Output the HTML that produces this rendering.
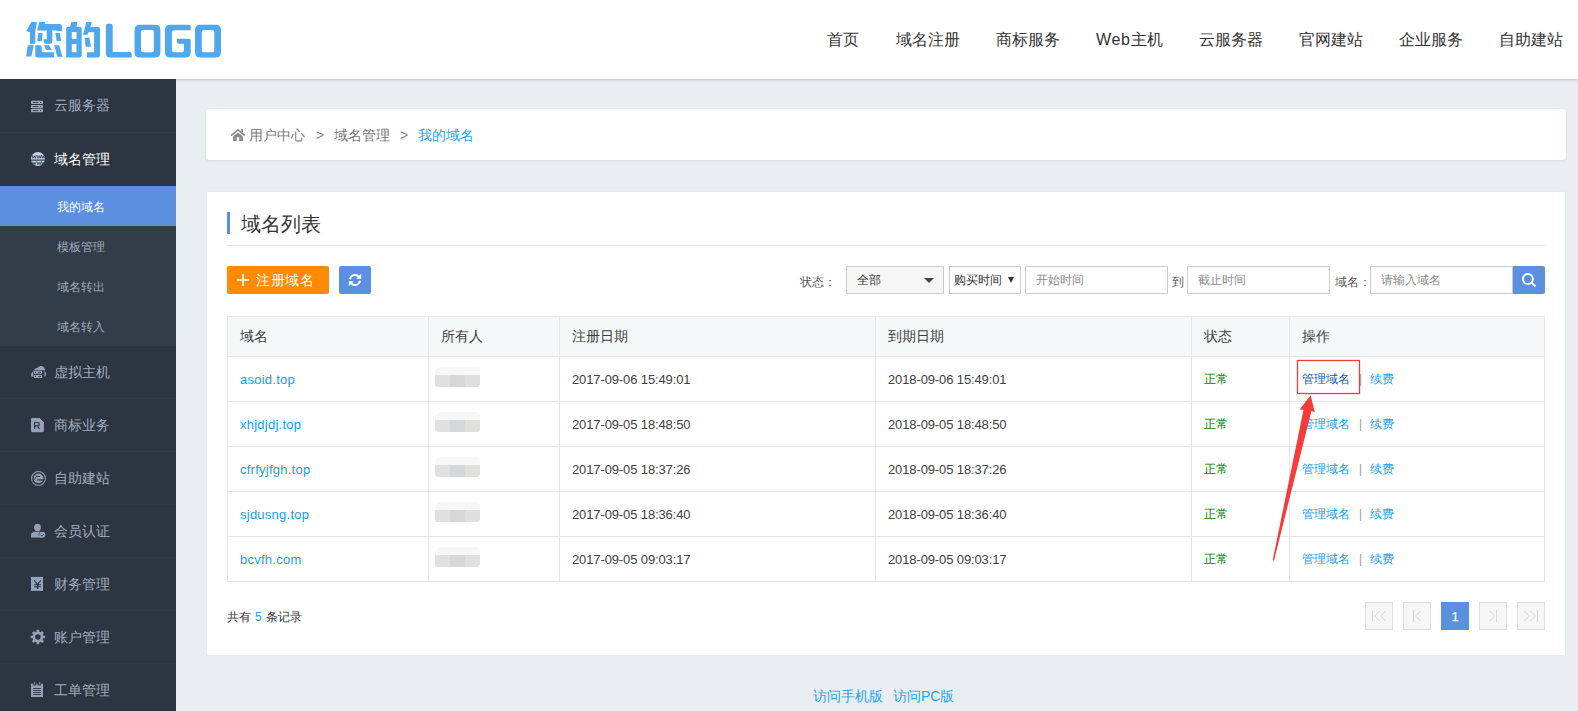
<!DOCTYPE html>
<html><head><meta charset="utf-8">
<style>
*{margin:0;padding:0;box-sizing:border-box}
html,body{width:1578px;height:711px;overflow:hidden;background:#e9eef1;font-family:"Liberation Sans",sans-serif;color:#333}
#hd{position:absolute;left:0;top:0;width:1578px;height:79px;background:#fff;box-shadow:0 1px 3px rgba(0,0,0,.2);z-index:5}
#logo{position:absolute;left:26px;top:21px}
#nav{position:absolute;top:0;left:0;height:79px}
#nav span{position:absolute;top:30px;font-size:16px;line-height:20px;color:#333;white-space:nowrap}
#sb{position:absolute;left:0;top:79px;width:176px;height:632px;background:#2c3541;z-index:6}
.mi{position:absolute;left:0;width:176px;height:53px;border-top:1px solid #2f3a47}
.mi .ic{position:absolute;left:30px;top:19px;width:15px;height:15px}
.mi .t{position:absolute;left:54px;top:17px;font-size:14px;line-height:18px;color:#a2acbf;white-space:nowrap}
.mi.on .t{color:#fff}
#sub{position:absolute;left:0;top:107px;width:176px;height:160px;background:#333d49}
.si{position:absolute;left:0;width:176px;height:40px}
.si .t{position:absolute;left:57px;top:14px;font-size:12px;line-height:15px;color:#9ea8b8;white-space:nowrap}
.si.on{background:#5b8fe0}
.si.on .t{color:#fff}
.card{position:absolute;background:#fff;border-radius:2px}
#bc{left:206px;top:109px;width:1360px;height:51px;border-radius:3px;box-shadow:0 1px 3px rgba(0,0,0,.09)}
#bc .t{position:absolute;top:17px;font-size:14px;line-height:18px;color:#777;white-space:nowrap}
#main{left:207px;top:192px;width:1358px;height:463px;border-radius:0;box-shadow:0 0 2px rgba(0,0,0,.04)}

#bc .home{position:absolute;left:24px;top:20px}
.ttl{position:absolute;left:20px;top:20px;width:3px;height:22px;background:#5b8fe0}
.ttlt{position:absolute;left:34px;top:19px;font-size:20px;line-height:26px;color:#333;white-space:nowrap}
.hr{position:absolute;left:20px;top:53px;width:1318px;height:1px;background:#e8e8e8}
.btn-o{position:absolute;left:20px;top:74px;width:102px;height:28px;background:#ff8a04;border-radius:2px;color:#fff}
.btn-o .t{position:absolute;left:29px;top:6px;font-size:14px;line-height:17px;white-space:nowrap;letter-spacing:.5px}
.btn-b{position:absolute;left:132px;top:74px;width:32px;height:28px;background:#5b8fe0;border-radius:2px}
.lbl{position:absolute;top:83px;font-size:12px;line-height:15px;color:#555;white-space:nowrap}
.sel{position:absolute;top:74px;height:28px;border:1px solid #ccc;background:#f6f6f6}
.inp{position:absolute;top:74px;height:28px;border:1px solid #ccc;background:#fff}
.sel .t,.inp .t{position:absolute;top:6px;font-size:12px;line-height:15px;white-space:nowrap}
.inp .t{color:#8c8c8c}
.sel .t{color:#333}
.btn-s{position:absolute;left:1306px;top:74px;width:32px;height:28px;background:#5b8fe0;border-radius:0 2px 2px 0}
#tb{position:absolute;left:20px;top:124px;width:1318px;height:266px;border:1px solid #e6e6e6}
#tb .hd{position:absolute;left:0;top:0;width:1316px;height:40px;background:#f5f8f9;border-bottom:1px solid #e6e6e6}
#tb .vl{position:absolute;top:0;width:1px;height:264px;background:#e6e6e6}
#tb .hl{position:absolute;left:0;width:1316px;height:1px;background:#e6e6e6}
#tb .c{position:absolute;white-space:nowrap}
.th{font-size:14px;line-height:17px;color:#3c3c3c}
.dn{font-size:13px;line-height:16px;color:#18a0f2;letter-spacing:.25px}
.dt{font-size:13px;line-height:16px;color:#404040;letter-spacing:-.12px}
.st{font-size:12px;line-height:15px;color:#008000}
.op{font-size:12px;line-height:15px;color:#18a0f5}
.op i{font-style:normal;color:#999;padding:0 8px 0 9px}
.blur{position:absolute;width:45px;height:22px}

.pg{position:absolute;top:410px;width:28px;height:28px;border:1px solid #dedede;background:#f6f6f6}
.pg svg{position:absolute;left:-1px;top:-1px}
.pg.on{background:#5b8fe0;border-color:#5b8fe0}
.pg.on span{position:absolute;left:0;top:6px;width:26px;text-align:center;font-size:13px;line-height:15px;font-weight:normal;color:#fff;-webkit-text-stroke:.25px #fff}
#ft{position:absolute;left:813px;top:688px;font-size:14px;line-height:17px;color:#2aa3f2;white-space:nowrap}
</style></head><body>
<div id="hd">
  <div id="logo">
    <svg style="position:absolute;left:-26px;top:-21px" width="240" height="70" viewBox="0 0 240 70">
      <g fill="#4fa8ed" fill-rule="evenodd">
        <path d="M31.3 22H36.9L35.3 31.3V43.7H30V32.2L26.3 31.3z"/>
        <path d="M39.3 22H45.2L44.6 23.9H59.7Q61.9 23.9 61.9 26V31.3H56.7V30.4H37.2z"/>
        <path d="M46.8 30.1H50.5Q52.3 30.1 52.3 31.9V41.9Q52.3 43.7 50.5 43.7H45.5Q43.7 43.7 43.7 41.9V39.3H46.8z"/>
        <path d="M38.4 32.9H42.7L41.8 40.9H37.2z"/>
        <path d="M55.4 32.9H59.7L61.3 40.9H56.7z"/>
        <path d="M27.9 45.2H33.8L31.3 56.4H26z"/>
        <path d="M35.3 45.2H39.8Q41.8 45.2 41.8 47.2V52.3H53.9V57.6H37.3Q35.3 57.6 35.3 55.6z"/>
        <path d="M44.3 45.2H49.2L51.7 49.9H46.1z"/>
        <path d="M54.2 45.2H59.1L62.5 56.7H57.3z"/>
        <path d="M71.2 22H77.4L76.5 26.7H80Q81.7 26.7 81.7 28.7V55.6Q81.7 57.6 79.7 57.6H66.2V28.7Q66.2 26.7 68.2 26.7H70zM71.8 31.9V39H76.5V31.9zM71.8 44V52.3H76.5V44z"/>
        <path d="M86.4 22H91.9L90.2 27H98Q100 27 100 29V55.6Q100 57.6 98 57.6H87V52.3H94.1V32.2H88.4L87.6 34.7H83z"/>
        <path d="M84.5 37.8H89.4L91 46.8H85.7z"/>
        <path d="M107.9 23.7H110.7Q112.7 23.7 112.7 25.7V52.1H129.7Q131.7 52.1 131.7 54.1V57.6H109.9Q105.9 57.6 105.9 53.6V25.7Q105.9 23.7 107.9 23.7z"/>
        <path d="M140 24.7H155Q160.4 24.7 160.4 30.1V52.2Q160.4 57.6 155 57.6H140Q134.5 57.6 134.5 52.2V30.1Q134.5 24.7 140 24.7zM143 30H152Q153.9 30 153.9 32V50.2Q153.9 52.2 152 52.2H143Q141 52.2 141 50.2V32Q141 30 143 30z"/>
        <path d="M170.5 24.7H189Q190.7 24.7 190.7 26.4V30.3H173.9Q171.9 30.3 171.9 32.3V50.2Q171.9 52.2 173.9 52.2H182Q184 52.2 184 50.2V43.7H178.8Q176.8 43.7 176.8 41.7V38.75H189Q190.7 38.75 190.7 40.5V52.2Q190.7 57.6 185.3 57.6H170.4Q165 57.6 165 52.2V30.1Q165 24.7 170.5 24.7z"/>
        <path d="M200.5 24.7H215.6Q221 24.7 221 30.1V52.2Q221 57.6 215.6 57.6H200.5Q195 57.6 195 52.2V30.1Q195 24.7 200.5 24.7zM203.8 30H212.3Q214.3 30 214.3 32V50.2Q214.3 52.2 212.3 52.2H203.8Q201.8 52.2 201.8 50.2V32Q201.8 30 203.8 30z"/>
      </g>
    </svg>
  </div>
  <div id="nav">
    <span style="left:827px">首页</span>
    <span style="left:896px">域名注册</span>
    <span style="left:996px">商标服务</span>
    <span style="left:1096px"><span style="position:static;letter-spacing:.65px">Web</span>主机</span>
    <span style="left:1199px">云服务器</span>
    <span style="left:1299px">官网建站</span>
    <span style="left:1399px">企业服务</span>
    <span style="left:1499px">自助建站</span>
  </div>
</div>
<div id="sb">
  <div class="mi" style="top:0;border-top:none"><span class="t">云服务器</span></div>
  <div class="mi on" style="top:53px;height:54px"><span class="t">域名管理</span></div>
  <div id="sub">
    <div class="si on" style="top:0"><span class="t">我的域名</span></div>
    <div class="si" style="top:40px"><span class="t">模板管理</span></div>
    <div class="si" style="top:80px"><span class="t">域名转出</span></div>
    <div class="si" style="top:120px"><span class="t">域名转入</span></div>
  </div>
  <div class="mi" style="top:267px;border-top:none"><span class="t">虚拟主机</span></div>
  <div class="mi" style="top:319px"><span class="t">商标业务</span></div>
  <div class="mi" style="top:372px"><span class="t">自助建站</span></div>
  <div class="mi" style="top:425px"><span class="t">会员认证</span></div>
  <div class="mi" style="top:478px"><span class="t">财务管理</span></div>
  <div class="mi" style="top:531px"><span class="t">账户管理</span></div>
  <div class="mi" style="top:584px"><span class="t">工单管理</span></div>
</div>
<div class="card" id="bc">
  <svg class="home" width="16" height="13" viewBox="0 0 16 13"><path d="M1 6.6L7.9 0.9 14.9 6.6" fill="none" stroke="#8c8c8c" stroke-width="1.6"/><rect x="11.2" y="0.1" width="1.8" height="3.4" fill="#8c8c8c"/><path d="M3.1 7.4L7.9 3.4 12.9 7.4V12H9.2V8.2H6.8V12H3.1z" fill="#8c8c8c"/></svg>
  <span class="t" style="left:43px">用户中心</span>
  <span class="t" style="left:110px;color:#888">&gt;</span>
  <span class="t" style="left:128px">域名管理</span>
  <span class="t" style="left:194px;color:#888">&gt;</span>
  <span class="t" style="left:212px;color:#2aa3f2">我的域名</span>
</div>
<div class="card" id="main">
  <div class="ttl"></div><span class="ttlt">域名列表</span>
  <div class="hr"></div>
  <div class="btn-o"><svg style="position:absolute;left:10px;top:8px" width="12" height="12" viewBox="0 0 12 12"><path d="M5.2 0h1.6v5.2H12v1.6H6.8V12H5.2V6.8H0V5.2h5.2z" fill="#fff"/></svg><span class="t">注册域名</span></div>
  <div class="btn-b"><svg style="position:absolute;left:9px;top:7px" width="14" height="14" viewBox="0 0 14 14"><g fill="none" stroke="#fff" stroke-width="1.9"><path d="M1.9 6.2A5.2 5.2 0 0 1 11 3.9"/><path d="M12.1 7.8A5.2 5.2 0 0 1 3 10.1"/></g><path d="M13.2 0.7v5.1h-5.1z" fill="#fff"/><path d="M0.8 13.3V8.2h5.1z" fill="#fff"/></svg></div>
  <span class="lbl" style="left:593px">状态：</span>
  <div class="sel" style="left:639px;width:98px"><span class="t" style="left:10px">全部</span><svg style="position:absolute;left:77px;top:11px" width="10" height="5" viewBox="0 0 10 5"><path d="M0 0h10L5 5z" fill="#444"/></svg></div>
  <div class="sel" style="left:742px;width:72px;background:#fff"><span class="t" style="left:4px">购买时间</span><svg style="position:absolute;left:58px;top:10px" width="6" height="6" viewBox="0 0 6 6"><path d="M0 0h6L3 6z" fill="#333"/></svg></div>
  <div class="inp" style="left:818px;width:143px"><span class="t" style="left:10px">开始时间</span></div>
  <span class="lbl" style="left:965px">到</span>
  <div class="inp" style="left:980px;width:143px"><span class="t" style="left:10px">截止时间</span></div>
  <span class="lbl" style="left:1128px">域名：</span>
  <div class="inp" style="left:1163px;width:143px"><span class="t" style="left:10px">请输入域名</span></div>
  <div class="btn-s"><svg style="position:absolute;left:9px;top:7px" width="14" height="14" viewBox="0 0 14 14"><circle cx="5.9" cy="6" r="5" fill="none" stroke="#fff" stroke-width="1.9"/><path d="M9.6 9.6l3.3 3.3" stroke="#fff" stroke-width="2" stroke-linecap="round"/></svg></div>
  <div id="tb">
<div class="hd"></div>
<div class="vl" style="left:200px"></div><div class="vl" style="left:331px"></div><div class="vl" style="left:647px"></div><div class="vl" style="left:963px"></div><div class="vl" style="left:1061px"></div>
<div class="hl" style="top:84px"></div><div class="hl" style="top:129px"></div><div class="hl" style="top:174px"></div><div class="hl" style="top:219px"></div>
<span class="c th" style="left:12px;top:11px">域名</span><span class="c th" style="left:213px;top:11px">所有人</span><span class="c th" style="left:344px;top:11px">注册日期</span><span class="c th" style="left:660px;top:11px">到期日期</span><span class="c th" style="left:976px;top:11px">状态</span><span class="c th" style="left:1074px;top:11px">操作</span>
<span class="c dn" style="left:12px;top:55px">asoid.top</span><div class="blur" style="left:207px;top:50px"><div style="position:absolute;left:0;top:0;width:45px;height:8px;background:#f7f7f7;border-radius:6px 4px 0 0"></div><div style="position:absolute;left:0;top:8px;width:15px;height:12px;background:#e0e0e0;border-radius:0 0 0 3px"></div><div style="position:absolute;left:15px;top:8px;width:15px;height:12px;background:#d6d7d9"></div><div style="position:absolute;left:30px;top:8px;width:15px;height:12px;background:#dfdfdd;border-radius:0 0 4px 0"></div></div><span class="c dt" style="left:344px;top:55px">2017-09-06 15:49:01</span><span class="c dt" style="left:660px;top:55px">2018-09-06 15:49:01</span><span class="c st" style="left:976px;top:55px">正常</span><span class="c op" style="left:1074px;top:55px"><b style="font-weight:normal;color:#0f5fb5">管理域名</b><i>|</i>续费</span>
<span class="c dn" style="left:12px;top:100px">xhjdjdj.top</span><div class="blur" style="left:207px;top:95px"><div style="position:absolute;left:0;top:0;width:45px;height:8px;background:#f7f7f7;border-radius:6px 4px 0 0"></div><div style="position:absolute;left:0;top:8px;width:15px;height:12px;background:#e0e0e0;border-radius:0 0 0 3px"></div><div style="position:absolute;left:15px;top:8px;width:15px;height:12px;background:#d6d7d9"></div><div style="position:absolute;left:30px;top:8px;width:15px;height:12px;background:#dfdfdd;border-radius:0 0 4px 0"></div></div><span class="c dt" style="left:344px;top:100px">2017-09-05 18:48:50</span><span class="c dt" style="left:660px;top:100px">2018-09-05 18:48:50</span><span class="c st" style="left:976px;top:100px">正常</span><span class="c op" style="left:1074px;top:100px"><b style="font-weight:normal">管理域名</b><i>|</i>续费</span>
<span class="c dn" style="left:12px;top:145px">cfrfyjfgh.top</span><div class="blur" style="left:207px;top:140px"><div style="position:absolute;left:0;top:0;width:45px;height:8px;background:#f7f7f7;border-radius:6px 4px 0 0"></div><div style="position:absolute;left:0;top:8px;width:15px;height:12px;background:#e0e0e0;border-radius:0 0 0 3px"></div><div style="position:absolute;left:15px;top:8px;width:15px;height:12px;background:#d6d7d9"></div><div style="position:absolute;left:30px;top:8px;width:15px;height:12px;background:#dfdfdd;border-radius:0 0 4px 0"></div></div><span class="c dt" style="left:344px;top:145px">2017-09-05 18:37:26</span><span class="c dt" style="left:660px;top:145px">2018-09-05 18:37:26</span><span class="c st" style="left:976px;top:145px">正常</span><span class="c op" style="left:1074px;top:145px"><b style="font-weight:normal">管理域名</b><i>|</i>续费</span>
<span class="c dn" style="left:12px;top:190px">sjdusng.top</span><div class="blur" style="left:207px;top:185px"><div style="position:absolute;left:0;top:0;width:45px;height:8px;background:#f7f7f7;border-radius:6px 4px 0 0"></div><div style="position:absolute;left:0;top:8px;width:15px;height:12px;background:#e0e0e0;border-radius:0 0 0 3px"></div><div style="position:absolute;left:15px;top:8px;width:15px;height:12px;background:#d6d7d9"></div><div style="position:absolute;left:30px;top:8px;width:15px;height:12px;background:#dfdfdd;border-radius:0 0 4px 0"></div></div><span class="c dt" style="left:344px;top:190px">2017-09-05 18:36:40</span><span class="c dt" style="left:660px;top:190px">2018-09-05 18:36:40</span><span class="c st" style="left:976px;top:190px">正常</span><span class="c op" style="left:1074px;top:190px"><b style="font-weight:normal">管理域名</b><i>|</i>续费</span>
<span class="c dn" style="left:12px;top:235px">bcvfh.com</span><div class="blur" style="left:207px;top:230px"><div style="position:absolute;left:0;top:0;width:45px;height:8px;background:#f7f7f7;border-radius:6px 4px 0 0"></div><div style="position:absolute;left:0;top:8px;width:15px;height:12px;background:#e0e0e0;border-radius:0 0 0 3px"></div><div style="position:absolute;left:15px;top:8px;width:15px;height:12px;background:#d6d7d9"></div><div style="position:absolute;left:30px;top:8px;width:15px;height:12px;background:#dfdfdd;border-radius:0 0 4px 0"></div></div><span class="c dt" style="left:344px;top:235px">2017-09-05 09:03:17</span><span class="c dt" style="left:660px;top:235px">2018-09-05 09:03:17</span><span class="c st" style="left:976px;top:235px">正常</span><span class="c op" style="left:1074px;top:235px"><b style="font-weight:normal">管理域名</b><i>|</i>续费</span>
</div>
  <span style="position:absolute;left:20px;top:418px;font-size:12px;line-height:15px;color:#333;white-space:nowrap">共有<span style="color:#18a0f2;padding:0 4px">5</span>条记录</span>

  <div class="pg" style="left:1158px"><svg width="28" height="28" viewBox="0 0 28 28"><g fill="none" stroke="#d4d4d4" stroke-width="1"><path d="M7.5 8v12"/><path d="M14.8 9L9.8 14l5 5M20.6 9L15.6 14l5 5"/></g></svg></div>
  <div class="pg" style="left:1196px"><svg width="28" height="28" viewBox="0 0 28 28"><g fill="none" stroke="#d4d4d4" stroke-width="1"><path d="M10.5 8v12"/><path d="M17.6 9L12.6 14l5 5"/></g></svg></div>
  <div class="pg on" style="left:1234px"><span>1</span></div>
  <div class="pg" style="left:1272px"><svg width="28" height="28" viewBox="0 0 28 28"><g fill="none" stroke="#d4d4d4" stroke-width="1"><path d="M17.5 8v12"/><path d="M10.6 9l5 5-5 5"/></g></svg></div>
  <div class="pg" style="left:1310px"><svg width="28" height="28" viewBox="0 0 28 28"><g fill="none" stroke="#d4d4d4" stroke-width="1"><path d="M20.5 8v12"/><path d="M7.2 9l5 5-5 5M13.2 9l5 5-5 5"/></g></svg></div>
</div>
<div id="ft"><span style="position:absolute;left:0;top:0">访问手机版</span><span style="position:absolute;left:80px;top:0">访问PC版</span></div>
<svg style="position:absolute;left:0;top:0;z-index:10" width="1578" height="711" viewBox="0 0 1578 711">
  <rect x="1297.5" y="360.5" width="62" height="33" fill="none" stroke="#f23c3c" stroke-width="1.3"/>
  <path d="M1310.7 395.3L1314.8 412.5L1311.5 410.8L1274 560.5L1272.6 560.5L1303.5 409.8L1299.6 409.5Z" fill="#f63b3b"/>
</svg>
<svg id="sbi" style="position:absolute;left:0;top:0;z-index:6" width="60" height="711" viewBox="0 0 60 711">
  <g fill="#a0aabd">
    <rect x="31" y="100.8" width="12" height="3.3" rx=".8"/><rect x="31" y="104.9" width="12" height="3.3" rx=".8"/><rect x="31" y="109" width="12" height="3.2" rx=".8"/>
  </g>
  <g fill="#2c3541"><rect x="32.8" y="102" width="5.6" height=".9"/><rect x="32.8" y="106.1" width="5.6" height=".9"/><rect x="32.8" y="110.2" width="5.6" height=".9"/><circle cx="40.6" cy="102.4" r=".6"/><circle cx="40.6" cy="106.5" r=".6"/><circle cx="40.6" cy="110.6" r=".6"/></g>
  <circle cx="37.9" cy="159" r="7" fill="#c6d2e8"/>
  <g fill="none" stroke="#2c3541" stroke-width=".75"><path d="M30.6 159.9H45.2"/><path d="M32 155l1.1 3.3 1.1-2.6 1.1 2.6 1.1-3.3M36.8 155l1.1 3.3 1.1-2.6 1.1 2.6 1.1-3.3M41.4 155l.9 3.3.9-2.6.9 2.6"/><path d="M31.8 161.6l1.1 3 1.1-2.3 1.1 2.3 1.1-3M36.8 161.6l1.1 3 1.1-2.3 1.1 2.3 1.1-3M41.4 161.6l.9 3 .9-2.3.9 2.3"/></g>
  <path d="M30.6 160.6H45.2" stroke="#2c3541" stroke-width=".6"/>
  <g fill="#97a3b8">
    <path d="M31 375.5c0-2.2 1.2-3.6 2.6-4.2.6-2.3 2.2-3.3 3.7-3.3.9-1.4 2.3-2.1 3.7-2.1 2.3 0 4.1 1.9 4.1 4.4 0 .3 0 .6-.1.9.7.7 1 1.6 1 2.7 0 1.5-.6 2.6-1.5 3.1v-6.7H33.3v6.7c-1.3-.3-2.3-.8-2.3-1.5z"/>
    <rect x="33.9" y="370.9" width="8.2" height="2.9"/><rect x="33.9" y="374.9" width="8.2" height="3.1"/>
  </g>
  <g fill="#2c3541"><circle cx="35.5" cy="372.4" r=".6"/><rect x="38" y="372" width="3" height=".8"/><circle cx="35.5" cy="376.4" r=".6"/><rect x="38" y="376" width="3" height=".8"/></g>
  <path d="M32.3 417.9h7.4l4.2 4.1v9.1q0 1.1-1.1 1.1H32.3q-1.3 0-1.3-1.3V419.2q0-1.3 1.3-1.3z" fill="#95a1b6"/>
  <path d="M39.8 417.6l4.3 4.1" stroke="#2c3541" stroke-width=".9"/>
  <path d="M34.6 428.8v-6.3h2.8q1.9 0 1.9 1.7 0 1.6-1.9 1.6h-2.8M37.1 425.8l2.4 3" fill="none" stroke="#2c3541" stroke-width="1.2"/>
  <circle cx="38.5" cy="478.4" r="6.9" fill="none" stroke="#95a1b6" stroke-width="1.1"/>
  <circle cx="38.5" cy="478.4" r="4.9" fill="#95a1b6"/>
  <rect x="37.4" y="476" width="2.6" height="1" fill="#2c3541"/>
  <rect x="37" y="479.3" width="7.5" height="1.3" fill="#2c3541"/>
  <path d="M32.5 482.2l4.6-6.8" stroke="#2c3541" stroke-width=".9"/>
  <g fill="#93a0b8"><ellipse cx="37.5" cy="527.5" rx="3.4" ry="3.7"/><path d="M31 537.6v-2.6q0-2.7 3.4-3.2h6.2q1.2.4 1.6 1v4.8z"/><circle cx="42.4" cy="534.8" r="3"/></g>
  <path d="M40.8 534.8l1.2 1.2 2-2" stroke="#2c3541" stroke-width=".8" fill="none"/>
  <path d="M41.2 531.4a3.4 3.4 0 0 0-2 4.4" stroke="#2c3541" stroke-width=".6" fill="none"/>
  <rect x="31" y="576.9" width="12" height="14" fill="#95a3bd"/>
  <path d="M34 580.3l3.5 3.8 3.5-3.8M34 584.8h7M34 586.8h7" stroke="#2c3541" stroke-width="1.1" fill="none"/><rect x="36.8" y="583.6" width="1.5" height="5.4" fill="#2c3541"/>
  <g transform="translate(37.9 637)" fill="#95a1b6"><circle r="5.4"/><g id="tooth"><rect x="-1.3" y="-7.2" width="2.6" height="14.4" rx=".5"/></g><rect x="-1.3" y="-7.2" width="2.6" height="14.4" rx=".5" transform="rotate(45)"/><rect x="-1.3" y="-7.2" width="2.6" height="14.4" rx=".5" transform="rotate(90)"/><rect x="-1.3" y="-7.2" width="2.6" height="14.4" rx=".5" transform="rotate(135)"/><circle r="2.8" fill="#2c3541"/></g>
  <path d="M31 683.8h2.3v1.8h3.1v-1.8h1.4v1.8h3v-1.8H43v13.1H31z" fill="#95a1b6"/>
  <g fill="#95a1b6"><rect x="34.1" y="682" width="1" height="2.5" rx=".4"/><rect x="39.2" y="682" width="1" height="2.5" rx=".4"/></g>
  <g fill="#2c3541"><rect x="33.1" y="688" width="7.7" height=".9"/><rect x="33.1" y="690" width="7.7" height=".9"/><rect x="33.1" y="692.1" width="7.7" height=".9"/><rect x="33.1" y="694.1" width="7.7" height=".9"/></g>
</svg>
</body></html>
